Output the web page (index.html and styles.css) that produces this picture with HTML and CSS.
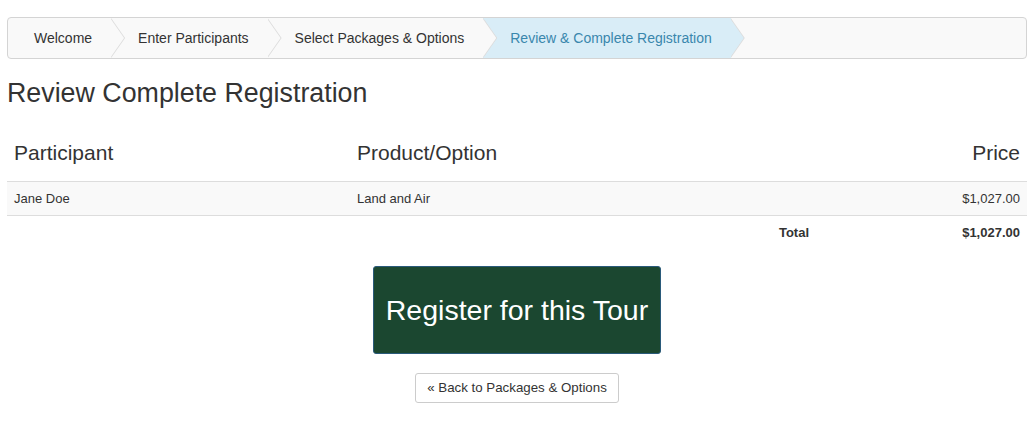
FILE: index.html
```html
<!DOCTYPE html>
<html lang="en">
<head>
  <meta charset="UTF-8">
  <title>Review Complete Registration</title>
  <link rel="stylesheet" href="styles.css">
</head>
<body>

<div class="page">
  <ul class="steps">
    <li>Welcome</li>
    <li>Enter Participants</li>
    <li>Select Packages &amp; Options</li>
    <li class="active">Review &amp; Complete Registration</li>
  </ul>

  <h2 class="title">Review Complete Registration</h2>

  <table class="summary">
    <thead>
      <tr>
        <th class="col-name">Participant</th>
        <th class="col-product">Product/Option</th>
        <th class="col-price">Price</th>
      </tr>
    </thead>
    <tbody>
      <tr class="item">
        <td>Jane Doe</td>
        <td>Land and Air</td>
        <td class="col-price">$1,027.00</td>
      </tr>
      <tr class="total">
        <td></td>
        <td class="label">Total</td>
        <td class="col-price">$1,027.00</td>
      </tr>
    </tbody>
  </table>

  <div class="actions">
    <button class="btn-register">Register for this Tour</button>
    <button class="btn-back">&laquo; Back to Packages &amp; Options</button>
  </div>
</div>

</body>
</html>
```

FILE: styles.css
```css
body {
  margin: 0;
  font-family: "Liberation Sans", Arial, sans-serif;
  color: #333;
  background: #fff;
}
.page {
  padding: 17px 8px 0 7px;
}

/* wizard steps */
.steps {
  display: flex;
  list-style: none;
  margin: 0;
  padding: 0;
  height: 40px;
  border: 1px solid #d4d4d4;
  border-radius: 4px;
  background: #f9f9f9;
}
.steps li {
  position: relative;
  display: flex;
  align-items: center;
  padding: 0 19px 0 27px;
  font-size: 14px;
  color: #333;
}
.steps li:first-child {
  padding-left: 26px;
}
.steps li::before,
.steps li::after {
  content: "";
  position: absolute;
  top: 0;
  height: 100%;
  clip-path: polygon(0 0, 100% 50%, 0 100%);
  z-index: 1;
}
.steps li::before {
  left: 100%;
  width: 14px;
  background: #dcdcdc;
}
.steps li::after {
  left: 100%;
  margin-left: -1px;
  width: 14px;
  background: #f9f9f9;
}
.steps li.active {
  background: #d9edf7;
  color: #3a87ad;
}
.steps li.active::after {
  background: #d9edf7;
}

.title {
  margin: 20px 0 25px;
  font-size: 26.8px;
  font-weight: normal;
  line-height: 1.1;
  color: #333;
}

/* summary table */
.summary {
  width: 100%;
  border-collapse: collapse;
}
.summary th {
  padding: 8px 7px 17px;
  font-size: 21px;
  font-weight: normal;
  line-height: 23px;
  text-align: left;
  border-bottom: 1px solid #ddd;
}
.summary td {
  padding: 7px 7px;
  font-size: 13px;
  line-height: 19px;
}
.summary .col-name {
  width: 329px;
}
.summary .col-product {
  width: 452px;
}
.summary .col-price {
  text-align: right;
}
.summary .item td {
  background: #f9f9f9;
  border-bottom: 1px solid #ddd;
}
.summary .total td {
  font-weight: bold;
}
.summary .total .label {
  text-align: right;
}

/* buttons */
.actions {
  display: flex;
  flex-direction: column;
  align-items: center;
  padding-top: 17px;
}
.btn-register {
  padding: 23px 12px;
  font-family: inherit;
  font-size: 28.5px;
  line-height: 40px;
  color: #fff;
  background: #1b4730;
  border: 1px solid #2a5a7a;
  border-radius: 3px;
}
.btn-back {
  margin-top: 19px;
  padding: 5px 11px;
  font-family: inherit;
  font-size: 13.3px;
  line-height: 18px;
  color: #333;
  background: #fff;
  border: 1px solid #ccc;
  border-radius: 3px;
}
```
